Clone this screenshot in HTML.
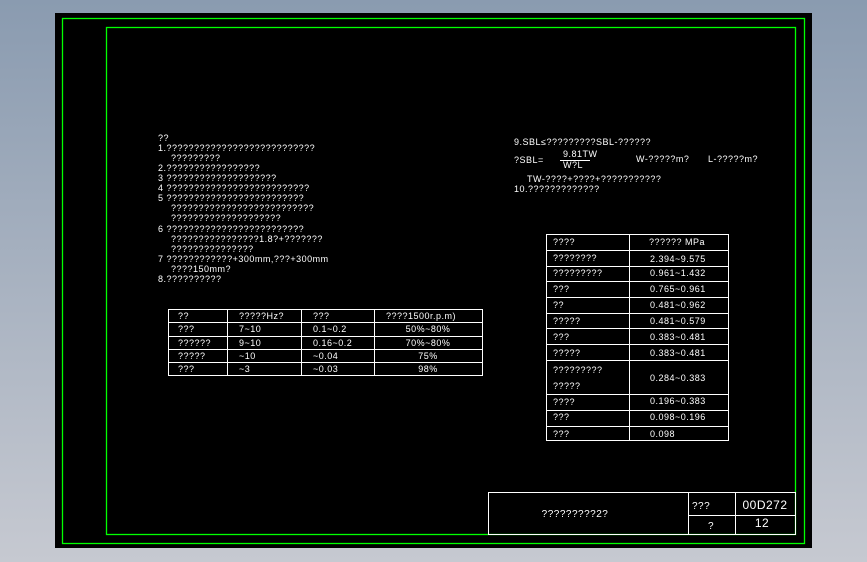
<!DOCTYPE html>
<html><head><meta charset="utf-8"><style>
html,body{margin:0;padding:0;width:867px;height:562px;overflow:hidden;background:linear-gradient(#8a9bb0,#c6c9d1);}
svg{position:absolute;left:0;top:0}
text{font-family:"Liberation Sans",sans-serif;font-size:9px;fill:#fff;letter-spacing:0.5px}
</style></head><body>
<svg width="867" height="562" xmlns="http://www.w3.org/2000/svg">
<rect x="55" y="13" width="757" height="535" fill="#000"/>
<rect x="62.5" y="18.5" width="742" height="525" fill="none" stroke="#00ff00" stroke-width="1.3"/>
<rect x="106.5" y="27.5" width="689" height="507" fill="none" stroke="#00ff00" stroke-width="1.3"/>
<g stroke="#fff" stroke-width="1" fill="none">
<rect x="168.5" y="309.5" width="314" height="66"/>
<path d="M168 322.5H482M168 336.5H482M168 349.5H482M168 362.5H482M227.5 309V376M301.5 309V376M374.5 309V376"/>
<rect x="546.5" y="234.5" width="182" height="206"/>
<path d="M546 250.5H728M546 266.5H728M546 281.5H728M546 297.5H728M546 313.5H728M546 328.5H728M546 344.5H728M546 360.5H728M546 394.5H728M546 410.5H728M546 426.5H728M629.5 234V441"/>
<rect x="488.5" y="492.5" width="307" height="42"/>
<path d="M688.5 492V534M735.5 492V534M688 515.5H796"/>
<path d="M560 160.5H590" />
</g>
<g>
<text x="158" y="141">??</text>
<text x="158" y="151">1.???????????????????????????</text>
<text x="171" y="161">?????????</text>
<text x="158" y="171">2.?????????????????</text>
<text x="158" y="181">3 ????????????????????</text>
<text x="158" y="191">4 ??????????????????????????</text>
<text x="158" y="201">5 ?????????????????????????</text>
<text x="171" y="211">??????????????????????????</text>
<text x="171" y="221">????????????????????</text>
<text x="158" y="232">6 ?????????????????????????</text>
<text x="171" y="242">????????????????1.8?+???????</text>
<text x="171" y="252">???????????????</text>
<text x="158" y="262">7 ????????????+300mm,???+300mm</text>
<text x="171" y="272">????150mm?</text>
<text x="158" y="282">8.??????????</text>

<text x="178" y="319">??</text><text x="239" y="319">?????Hz?</text><text x="313" y="319">???</text><text x="386" y="319">????1500r.p.m)</text>
<text x="178" y="332">???</text><text x="239" y="332">7~10</text><text x="313" y="332">0.1~0.2</text><text x="428" y="332" text-anchor="middle">50%~80%</text>
<text x="178" y="346">??????</text><text x="239" y="346">9~10</text><text x="313" y="346">0.16~0.2</text><text x="428" y="346" text-anchor="middle">70%~80%</text>
<text x="178" y="359">?????</text><text x="239" y="359">~10</text><text x="313" y="359">~0.04</text><text x="428" y="359" text-anchor="middle">75%</text>
<text x="178" y="372">???</text><text x="239" y="372">~3</text><text x="313" y="372">~0.03</text><text x="428" y="372" text-anchor="middle">98%</text>

<text x="514" y="145">9.SBL≤?????????SBL-??????</text>
<text x="514" y="163">?SBL=</text>
<text x="563" y="157">9.81TW</text>
<text x="563" y="168">W?L</text>
<text x="636" y="162">W-?????m?</text>
<text x="708" y="162">L-?????m?</text>
<text x="527" y="182">TW-????+????+???????????</text>
<text x="514" y="192">10.?????????????</text>

<text x="553" y="245">????</text><text x="649" y="245">?????? MPa</text>
<text x="553" y="261">????????</text><text x="650" y="262">2.394~9.575</text>
<text x="553" y="276">?????????</text><text x="650" y="276">0.961~1.432</text>
<text x="553" y="292">???</text><text x="650" y="292">0.765~0.961</text>
<text x="553" y="308">??</text><text x="650" y="308">0.481~0.962</text>
<text x="553" y="324">?????</text><text x="650" y="324">0.481~0.579</text>
<text x="553" y="340">???</text><text x="650" y="340">0.383~0.481</text>
<text x="553" y="356">?????</text><text x="650" y="356">0.383~0.481</text>
<text x="553" y="373">?????????</text><text x="650" y="381">0.284~0.383</text>
<text x="553" y="389">?????</text>
<text x="553" y="405">????</text><text x="650" y="404">0.196~0.383</text>
<text x="553" y="420">???</text><text x="650" y="420">0.098~0.196</text>
<text x="553" y="437">???</text><text x="650" y="437">0.098</text>

<text x="575" y="517" text-anchor="middle" style="font-size:10px">?????????2?</text>
<text x="692" y="509" style="font-size:10px">???</text>
<text x="708" y="529" style="font-size:10px">?</text>
<text x="765" y="509" text-anchor="middle" style="font-size:12px">00D272</text>
<text x="762" y="527" text-anchor="middle" style="font-size:12px">12</text>
</g>
</svg>
</body></html>
